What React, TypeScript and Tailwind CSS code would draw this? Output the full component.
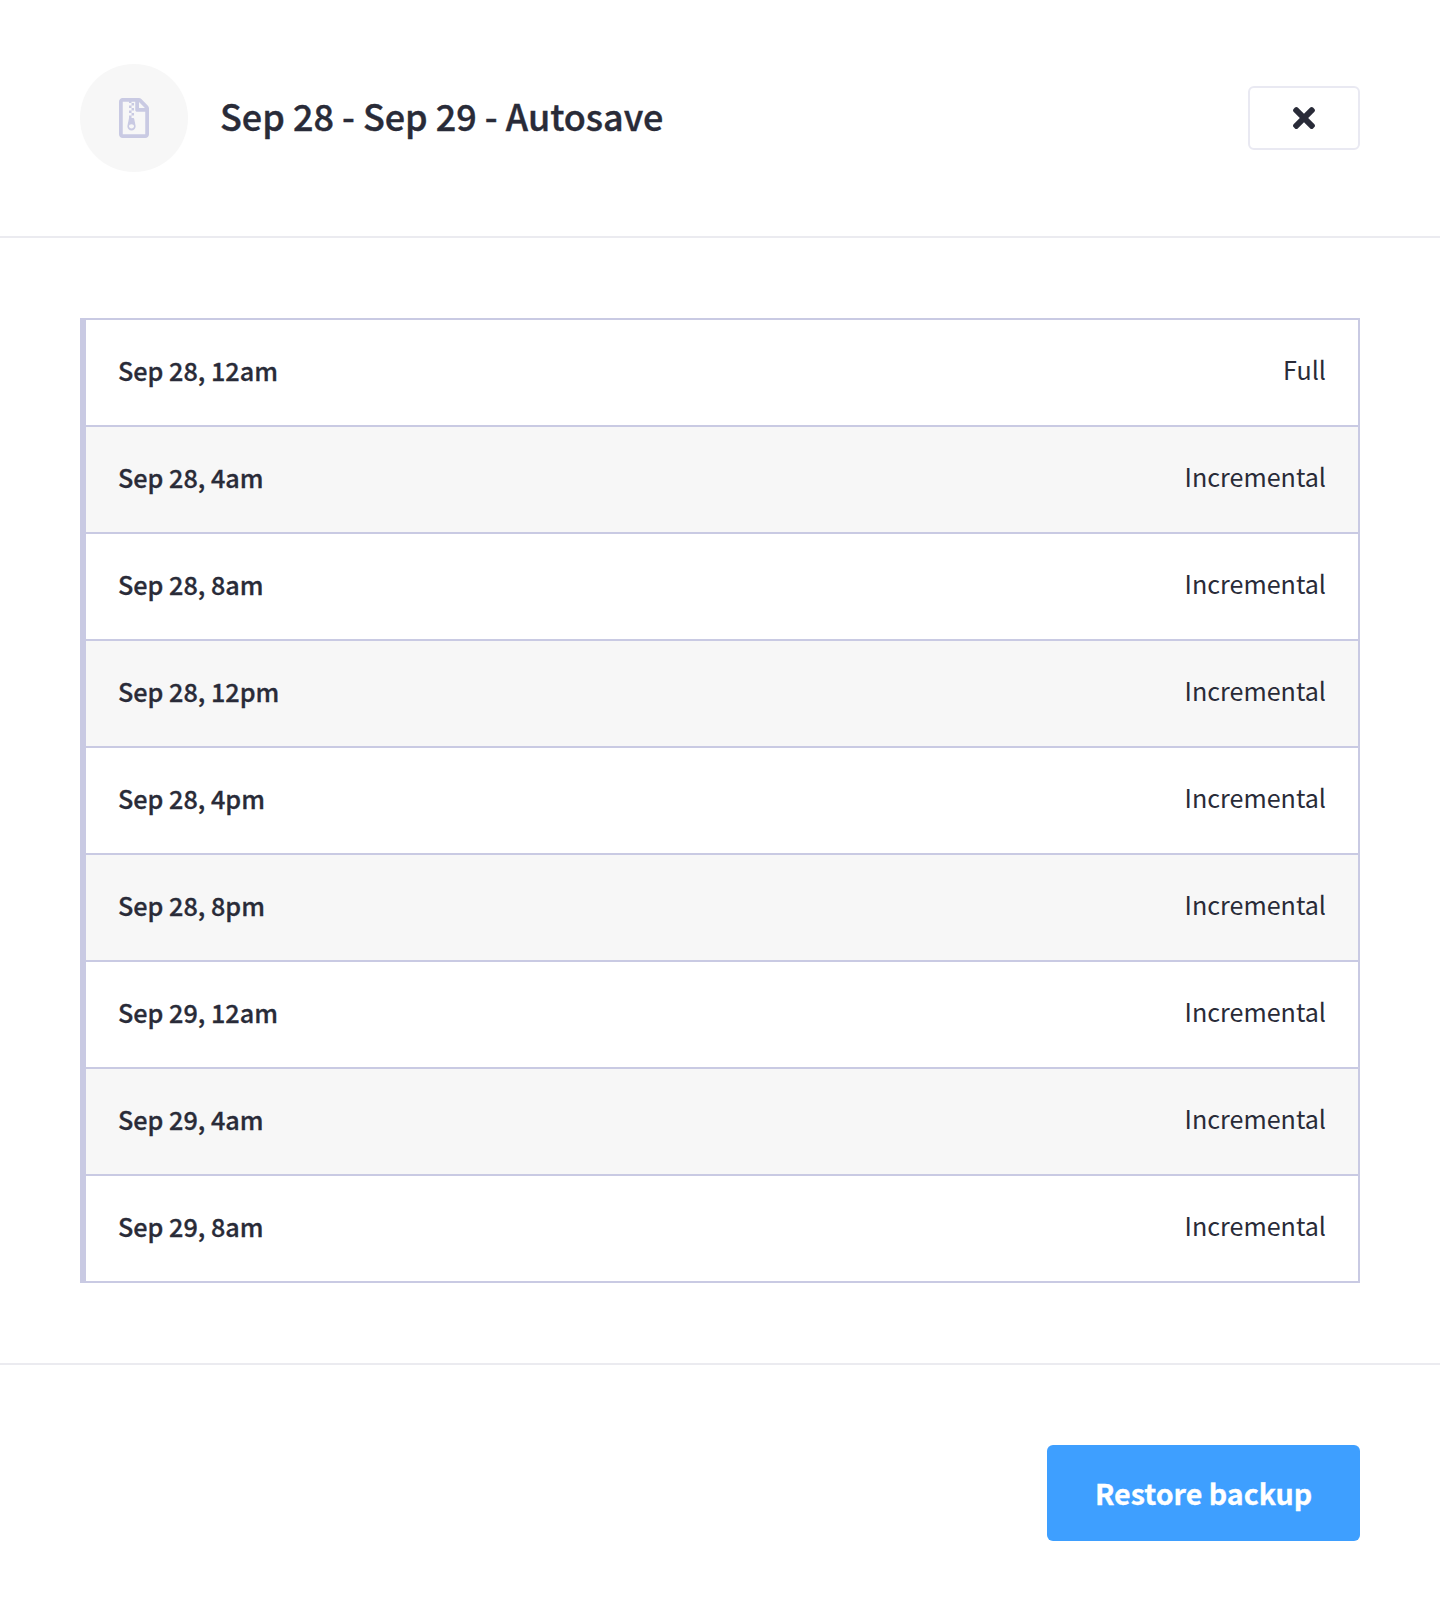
import { FaRegFileArchive, FaTimes } from "react-icons/fa";

const backups = [
  { time: "Sep 28, 12am", kind: "Full" },
  { time: "Sep 28, 4am", kind: "Incremental" },
  { time: "Sep 28, 8am", kind: "Incremental" },
  { time: "Sep 28, 12pm", kind: "Incremental" },
  { time: "Sep 28, 4pm", kind: "Incremental" },
  { time: "Sep 28, 8pm", kind: "Incremental" },
  { time: "Sep 29, 12am", kind: "Incremental" },
  { time: "Sep 29, 4am", kind: "Incremental" },
  { time: "Sep 29, 8am", kind: "Incremental" },
];

export default function App() {
  return (
    <div className="min-h-[1600px] w-full bg-white font-['Noto_Sans_CJK_SC',sans-serif] text-[#292b38]">
      <header className="flex items-center border-b-2 border-[#ebebf0] px-20 py-16">
        <div className="flex size-[108px] items-center justify-center rounded-full bg-[#f7f7f7]">
          <FaRegFileArchive className="h-10 w-[30px] text-[#c9cae3]" />
        </div>
        <h1 className="ml-8 pb-1.5 text-[35.95px] leading-[50px] font-medium [-webkit-text-stroke:0.4px_#292b38]">
          Sep 28 - Sep 29 - Autosave
        </h1>
        <button aria-label="Close" className="ml-auto flex h-16 w-28 items-center justify-center rounded-md border-2 border-[#e9e9f2]">
          <FaTimes className="h-8 w-[22px]" />
        </button>
      </header>
      <main className="p-20">
        <ul className="border-t-2 border-r-2 border-l-[6px] border-[#c9cae3]">
          {backups.map((b) => (
            <li
              key={b.time}
              className="flex h-[107px] items-center justify-between border-b-2 border-[#c9cae3] px-8 text-[25.2px] leading-9 even:bg-[#f7f7f7]"
            >
              <span className="pb-1.5 font-medium [-webkit-text-stroke:0.3px_#292b38]">{b.time}</span>
              <span className="pb-2 text-[25.1px]">{b.kind}</span>
            </li>
          ))}
        </ul>
      </main>
      <footer className="flex justify-end border-t-2 border-[#ebebf0] px-20 pt-20">
        <button className="flex h-24 w-[313px] items-center justify-center rounded-md bg-[#3e9fff] text-[28.6px] leading-10 font-bold text-white [-webkit-text-stroke:0.3px_white]">
          Restore backup
        </button>
      </footer>
    </div>
  );
}
